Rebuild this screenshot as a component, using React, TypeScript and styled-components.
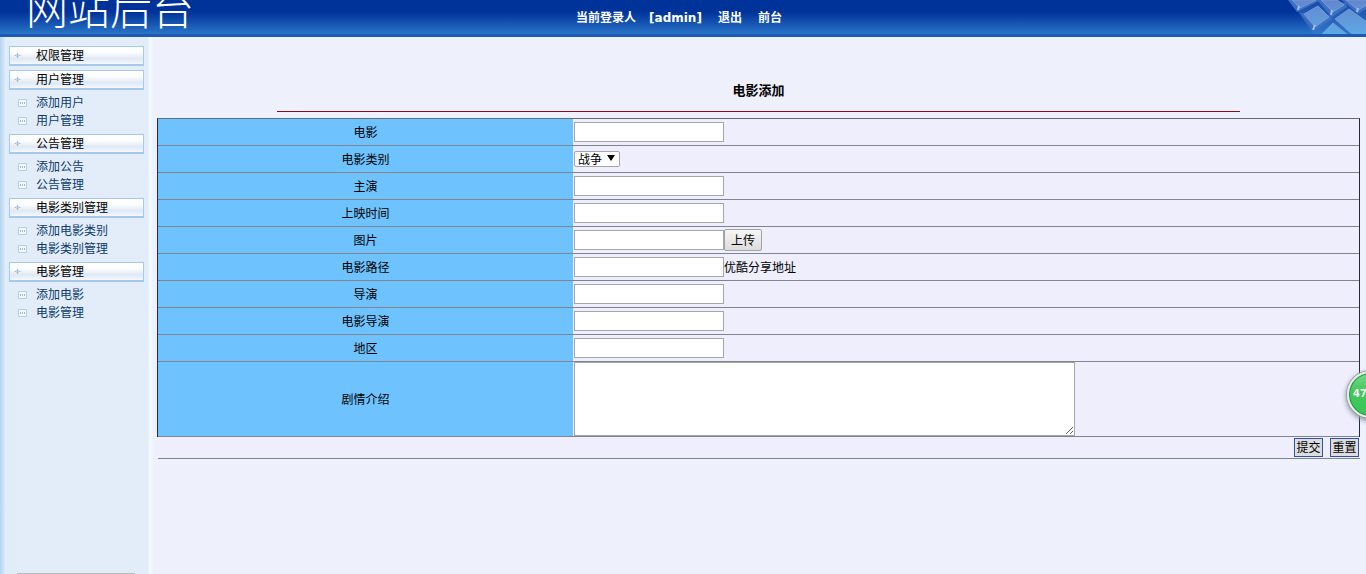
import React from "react";
import styled, { createGlobalStyle } from "styled-components";

const GlobalStyle = createGlobalStyle`
  * { box-sizing: border-box; }
  body {
    margin: 0;
    background: #eef1fc;
    color: #000;
    font: 12px/18px "Liberation Sans", "Noto Sans CJK SC", sans-serif;
  }
  input, select, textarea, button { font: inherit; color: inherit; border-radius: 0; }
`;

const Page = styled.div`
  display: flex;
  flex-direction: column;
  min-height: 100vh;
  overflow: hidden;
`;

const Header = styled.header`
  display: grid;
  grid-template-columns: 1fr auto 1fr;
  height: 37px;
  overflow: hidden;
  color: #fff;
  background: linear-gradient(#003399 0, #003399 12px, #2a74c8 34px);
  border-bottom: 3px solid #1c5cb0;
`;

const Brand = styled.div`
  padding-left: 26px;
  height: 34px;
  font-family: "Noto Sans CJK SC", sans-serif;
  font-size: 42px;
  font-weight: 300;
  line-height: 14px;
  white-space: nowrap;
`;

const Account = styled.nav`
  display: flex;
  align-items: center;
  gap: 16px;
  height: 34px;
  padding: 2px 8px 0 0;
  font-family: "DejaVu Sans", "Noto Sans CJK SC", sans-serif;
  font-weight: bold;
  a { color: inherit; text-decoration: none; }
`;

const User = styled.span`
  display: flex;
  gap: 13px;
`;

const Keys = styled.svg`
  justify-self: end;
  width: 86px;
  height: 34px;
`;

const Body = styled.div`
  display: flex;
  flex: 1;
`;

const Sidebar = styled.aside`
  flex: none;
  display: flex;
  flex-direction: column;
  justify-content: space-between;
  width: 153px;
  padding: 9px 9px 0;
  background: linear-gradient(90deg, #b5d5f0 0, #cfe4f7 4px, #deecfb 5px, #e2edf9 18px, #e2edf9 148px, #eff7ff 149px, #eff7ff 152px, #eef1fc 153px);
`;

const Menu = styled.nav`
  display: flex;
  flex-direction: column;
  gap: 4px;
`;

const GroupTitle = styled.h2`
  display: flex;
  align-items: center;
  height: 20px;
  margin: 0;
  padding-left: 4px;
  gap: 15px;
  font-size: 12px;
  font-weight: normal;
  line-height: 18px;
  border: 1px solid #a9c8ea;
  border-bottom-width: 2px;
  background: linear-gradient(#fff 0, #fbfcfe 35%, #dfe8f3 70%, #f4f8fd 100%);
`;

const GroupList = styled.ul`
  list-style: none;
  margin: 0;
  padding: 4px 0 0;
`;

const GroupLink = styled.a`
  display: flex;
  align-items: center;
  gap: 9px;
  height: 18px;
  padding-left: 9px;
  color: #0b3a6b;
  text-decoration: none;
`;

const FootLine = styled.div`
  width: 118px;
  margin-left: 8px;
  border-bottom: 1px solid #b9b9b9;
`;

const Main = styled.main`
  flex: 1;
  min-width: 0;
  padding: 44px 6px 0 4px;
`;

const Title = styled.h1`
  width: 80%;
  height: 31px;
  margin: 0 auto 6px;
  padding-top: 1px;
  border-bottom: 1px solid #8a0c18;
  font-size: 13px;
  line-height: 18px;
  text-align: center;
`;

const Form = styled.form`
  background: #eeeefd;
`;

const Fields = styled.div`
  border: 1px solid #222b3a;
  border-top-color: #666b78;
  border-bottom: 0;
`;

const Row = styled.div<{ $tall?: boolean }>`
  display: grid;
  grid-template-columns: 415px 1fr;
  height: ${(p) => (p.$tall ? 75 : 27)}px;
  border-bottom: 1px solid #80848f;
`;

const Label = styled.label`
  display: flex;
  align-items: center;
  justify-content: center;
  padding-top: 2px;
  background: #6ec2fd;
`;

const Cell = styled.div`
  display: flex;
  align-items: center;
  padding-left: 1px;
`;

const Note = styled.span`
  padding-top: 2px;
`;

const TextBox = styled.input`
  width: 150px;
  height: 20px;
  padding: 1px 2px;
  border: 1px solid #a5a5ae;
  background: #fff;
`;

const TypeBox = styled.span`
  position: relative;
  display: flex;
  &::after {
    content: "";
    position: absolute;
    right: 5px;
    top: 4px;
    border: 4px solid transparent;
    border-top: 6px solid #000;
    border-bottom: 0;
    pointer-events: none;
  }
`;

const TypeSelect = styled.select`
  appearance: none;
  width: 46px;
  height: 16px;
  padding: 1px 0 0 3px;
  border: 1px solid #a5a5ae;
  border-radius: 2px;
  background: #fff;
  line-height: 14px;
`;

const UploadButton = styled.button`
  width: 38px;
  height: 22px;
  padding: 2px 0 0;
  border: 1px solid #a2a2a2;
  border-radius: 2px;
  background: linear-gradient(#f6f6f6, #dcdcdc);
`;

const Story = styled.textarea`
  width: 501px;
  height: 74px;
  border: 1px solid #a5a5ae;
  background: #fff;
  resize: both;
`;

const Actions = styled.div`
  display: flex;
  justify-content: flex-end;
  align-items: center;
  gap: 7px;
  height: 22px;
  padding-right: 1px;
  margin-left: 1px;
  border-bottom: 1px solid #80848f;
`;

const ActionButton = styled.button`
  width: 29px;
  height: 19px;
  padding: 2px 0 0;
  border: 1px solid #2f55a0;
  background: #dddddf;
  line-height: 15px;
`;

const Badge = styled.div`
  position: fixed;
  right: -28px;
  top: 371px;
  width: 47px;
  height: 47px;
  padding-left: 4px;
  border: 2px solid #e6eee8;
  border-radius: 50%;
  box-shadow: 0 0 0 1px #9aa3a0, 0 2px 5px 1px #8c90a0, inset 0 0 0 1px #1f8f42;
  background: linear-gradient(#7ad98a, #3fc85c 45%, #3cc65a);
  color: #fff;
  font: bold 10px/42px "DejaVu Sans", sans-serif;
`;

const Plus = () => (
  <svg width="7" height="7" viewBox="0 0 7 7" fill="#9dbbd8" aria-hidden="true">
    <path d="M1 3h1v1H1zM5 3h1v1H5zM3 1h1v5H3z" />
    <path d="M0 3h1v1H0zM6 3h1v1H6zM2 2h1v3H2zM4 2h1v3H4z" opacity=".4" />
  </svg>
);

const Dots = () => (
  <svg width="9" height="8" viewBox="0 0 9 8" aria-hidden="true">
    <path d="M.5.5h8v7h-8z" fill="#f5faff" stroke="#b4cfe8" />
    <path d="M2 3h1v2H2zM4 3h1v2H4zM6 3h1v2H6z" fill="#9dbad6" />
  </svg>
);

const groups = [
  { title: "权限管理", links: [] },
  { title: "用户管理", links: ["添加用户", "用户管理"] },
  { title: "公告管理", links: ["添加公告", "公告管理"] },
  { title: "电影类别管理", links: ["添加电影类别", "电影类别管理"] },
  { title: "电影管理", links: ["添加电影", "电影管理"] },
];

const Field = ({ id, label, children }: { id: string; label: string; children?: React.ReactNode }) => (
  <Row>
    <Label htmlFor={id}>{label}</Label>
    <Cell>
      <TextBox id={id} type="text" />
      {children}
    </Cell>
  </Row>
);

export default function App() {
  return (
    <Page>
      <GlobalStyle />
      <Header>
        <Brand>网站后台</Brand>
        <Account>
          <User>
            <span>当前登录人</span>
            <span>[admin]</span>
          </User>
          <a href="#logout">退出</a>
          <a href="#front">前台</a>
        </Account>
        <Keys viewBox="0 0 86 34" aria-hidden="true">
          <defs>
            <linearGradient id="key" x1="0" y1="0" x2="0" y2="34" gradientUnits="userSpaceOnUse">
              <stop offset="0" stopColor="#6386cc" />
              <stop offset="1" stopColor="#5ea8e6" />
            </linearGradient>
            <linearGradient id="gap" x1="0" y1="0" x2="0" y2="34" gradientUnits="userSpaceOnUse">
              <stop offset="0" stopColor="#1746a4" />
              <stop offset="1" stopColor="#2f78cc" />
            </linearGradient>
          </defs>
          <path d="M8 0 18 12 33 33V34H86V0z" fill="url(#gap)" />
          <g fill="#3c70c2">
            <path d="M8 0 17 12 41 0z" />
            <path d="M20 13 34 32 52 19 50 15z" />
            <path d="M37 0 52 17 67 7 66 3z" />
            <path d="M62 0 78 14 86 9V0z" />
          </g>
          <g fill="url(#key)" stroke="#7399d8" strokeWidth="1">
            <path d="M12 0 20 8 36 0z" />
            <path d="M24 14 38 6 49 17 35 27z" />
            <path d="M41 0 53 12 64 5 57 0z" />
            <path d="M66 0 78 10 87 5V0z" />
            <path d="M55 19 69 9 87 22V35H73z" />
            <path d="M41 35 53 23 68 35z" />
          </g>
          <path d="M33 30 35 25M51 15 52 10M77 12 78 8M18 10 19 6" stroke="#a3c0ea" strokeWidth="2" />
        </Keys>
      </Header>
      <Body>
        <Sidebar>
          <Menu>
            {groups.map((g) => (
              <div key={g.title}>
                <GroupTitle><Plus />{g.title}</GroupTitle>
                {g.links.length > 0 && (
                  <GroupList>
                    {g.links.map((l) => (
                      <li key={l}><GroupLink href="#"><Dots />{l}</GroupLink></li>
                    ))}
                  </GroupList>
                )}
              </div>
            ))}
          </Menu>
          <FootLine />
        </Sidebar>
        <Main>
          <Title>电影添加</Title>
          <Form>
            <Fields>
              <Field id="name" label="电影" />
              <Row>
                <Label htmlFor="type">电影类别</Label>
                <Cell>
                  <TypeBox>
                    <TypeSelect id="type"><option>战争</option></TypeSelect>
                  </TypeBox>
                </Cell>
              </Row>
              <Field id="star" label="主演" />
              <Field id="date" label="上映时间" />
              <Field id="picture" label="图片">
                <UploadButton type="button">上传</UploadButton>
              </Field>
              <Field id="path" label="电影路径"><Note>优酷分享地址</Note></Field>
              <Field id="director" label="导演" />
              <Field id="filmDirector" label="电影导演" />
              <Field id="region" label="地区" />
              <Row $tall>
                <Label htmlFor="story">剧情介绍</Label>
                <Cell><Story id="story" /></Cell>
              </Row>
            </Fields>
            <Actions>
              <ActionButton type="submit">提交</ActionButton>
              <ActionButton type="reset">重置</ActionButton>
            </Actions>
          </Form>
        </Main>
      </Body>
      <Badge>47</Badge>
    </Page>
  );
}
